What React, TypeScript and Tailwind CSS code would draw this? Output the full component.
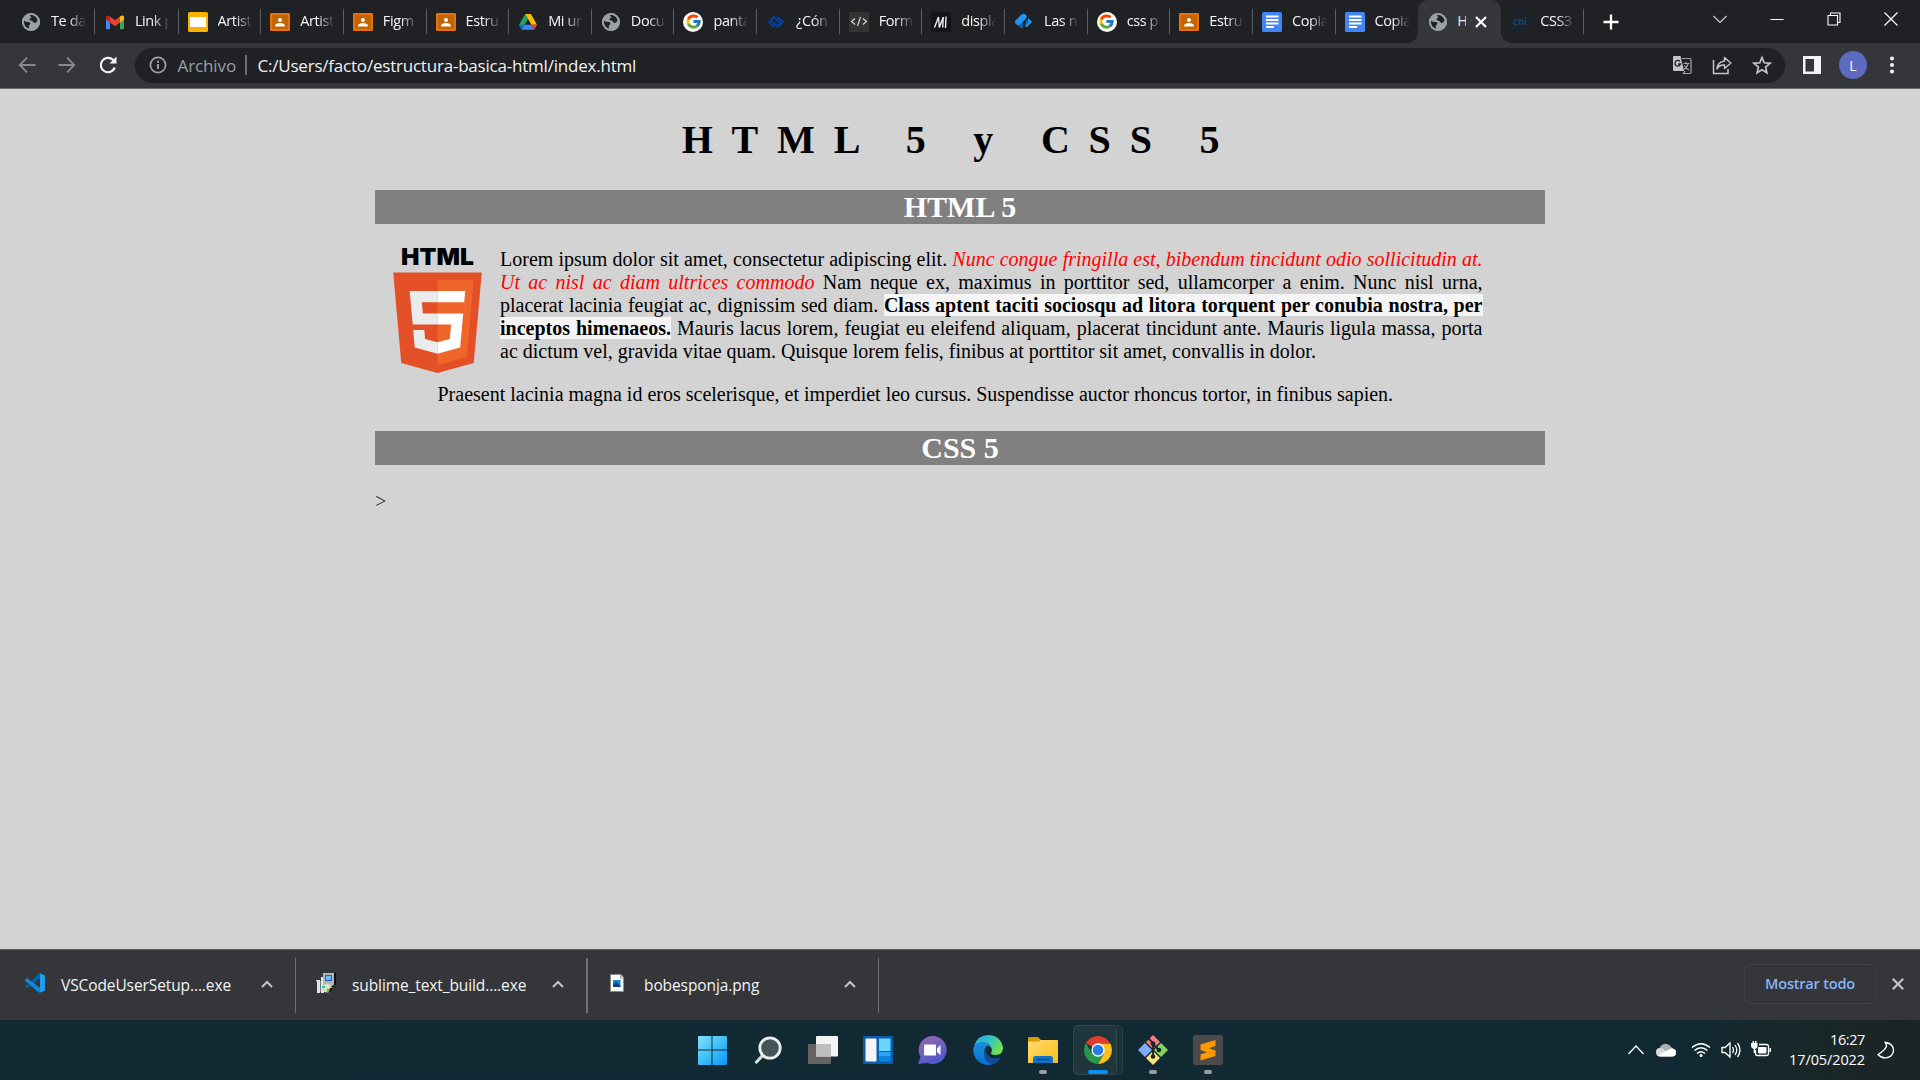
import React from 'react';
import { FcGoogle } from 'react-icons/fc';

const UI = 'font-["Open_Sans","Noto_Sans",sans-serif]';

function Globe() {
  return (
    <svg viewBox="0 0 20 20" className="size-5">
      <circle cx="10" cy="10" r="9" fill="#9aa0a6" />
      <path d="M3 8.500c1.500 1.800 3.500 1.200 5 1.600 1.800.5 1.600 2.400.4 2.900-1 .5-.6 1.800-.2 3.800C5 16.300 2.600 13.500 3 8.500zM9 3.200c3-.7 6.500 1 7.700 5-1.400 1.700-1.500 3-3.200 2.800-1.600-.2-1.200-2-2.700-2.200-1.700-.2-2.500-.6-2.300-1.800.3-1.200 2-.6 2-1.700C10.500 4.500 8.500 4.500 9 3.200z" fill="#202124" />
      <circle cx="10" cy="10" r="8.100" fill="none" stroke="#9aa0a6" strokeWidth="1.800" />
    </svg>
  );
}

function Gmail() {
  return (
    <svg viewBox="0 0 20 20" className="size-5">
      <path d="M1 5.500V16a1.200 1.200 0 0 0 1.200 1.200H5V9z" fill="#4285f4" />
      <path d="M19 5.500V16a1.200 1.200 0 0 1-1.200 1.200H15V9z" fill="#34a853" />
      <path d="M5 4.500v6l5 3.800 5-3.800v-6l-5 3.800z" fill="#ea4335" />
      <path d="M1 5.500C1 3.200 3.300 3.200 5 4.500v6L1 7.500z" fill="#c5221f" />
      <path d="M19 5.500c0-2.300-2.300-2.300-4-1v6l4-3z" fill="#fbbc04" />
    </svg>
  );
}

function Slides() {
  return (
    <svg viewBox="0 0 20 20" className="size-5">
      <rect width="20" height="20" rx="1.500" fill="#f9b300" />
      <rect x="2" y="5" width="16" height="10" fill="#fff" />
    </svg>
  );
}

function Classroom() {
  return (
    <svg viewBox="0 0 20 20" className="size-5">
      <rect y="1" width="20" height="18" rx="1.200" fill="#e8710a" />
      <rect x="2" y="3" width="16" height="14" fill="#c26401" />
      <circle cx="10" cy="8" r="2" fill="#fff" />
      <path d="M5 14.500c0-2.400 2.500-3.400 5-3.400s5 1 5 3.400z" fill="#fff" />
    </svg>
  );
}

function Drive() {
  return (
    <svg viewBox="0 0 20 20" className="size-5">
      <path d="M7.200 2 1 12.800l2.900 4.700 6.100-10.600z" fill="#1ea362" />
      <path d="M7.200 2h5.600l2.700 4.600L19 12.800h-5.600z" fill="#fbbc04" />
      <path d="M3.700 17.700 6.600 12.800H13.400l2.900 4.900z" fill="#4285f4" />
      <path d="M13.400 12.800H19l-2.700 4.900z" fill="#ea4335" />
      <path d="M1 12.800h5.600l-2.900 4.900z" fill="#1967d2" />
    </svg>
  );
}

function Google() {
  return (
    <span className="flex size-5 items-center justify-center rounded-full bg-white">
      <FcGoogle size={17} />
    </span>
  );
}

function BlueKnot() {
  return (
    <svg viewBox="0 0 20 20" className="size-5" fill="none" stroke="#0a3f94" strokeWidth="2">
      <path d="M8.500 15 3 10l5-5 6.500 6.500-2.500 2.500M11.500 5l5.500 5-5 5L6 8.800" />
    </svg>
  );
}

function CodeIcon() {
  return (
    <svg viewBox="0 0 20 20" className="size-5">
      <rect width="20" height="20" fill="#333" />
      <path d="M6 6.500 2.500 9.500 6 12.500M14 6.500l3.500 3L14 12.500M11.500 5 8.500 14" fill="none" stroke="#ddd" strokeWidth="1.100" />
    </svg>
  );
}

function Mdn() {
  return (
    <svg viewBox="0 0 20 20" className="size-5">
      <rect width="20" height="20" fill="#15141a" />
      <path d="M3.500 15.500 7.500 5l.8 10.500L12.300 5M15 4.500l-.5 11.500M12.300 5l-.6 10.500" fill="none" stroke="#eee" strokeWidth="1.400" />
    </svg>
  );
}

function BlueShapes() {
  return (
    <svg viewBox="0 0 20 20" className="size-5">
      <path d="M1 9 7.500 2.500q2-1.500 4 0t.5 4L6.500 13q-2 1-4-.5T1 9z" fill="#1d96f5" />
      <path d="M4.500 13.500 9 10v5.500q-2 2-4.500-2z" fill="#17619c" />
      <path d="m14.500 6 3.500 4-5.500 5.500q-2-2-.5-4 2-2.500 2.500-5.500z" fill="#1d96f5" />
      <path d="m12 7.500 2.500 2.500-3 3z" fill="#17619c" />
    </svg>
  );
}

function Docs() {
  return (
    <svg viewBox="0 0 20 20" className="size-5">
      <rect width="20" height="20" rx="1.500" fill="#4285f4" />
      <path d="M4 4.500h12.500M4 8h12.500M4 11.500h12.500M4 15h8" stroke="#fff" strokeWidth="1.900" />
    </svg>
  );
}

function Cni() {
  return (
    <svg viewBox="0 0 20 20" className="size-5" fill="none">
      <path d="M5 4Q13-.5 18 4q2 4-1 8M16 15Q8 21 2 16-.5 11 3 6" stroke="#0b2a45" strokeWidth="1.300" />
      <path d="M7.500 8Q4 7.500 3.800 10.500 4 13.500 7.500 12.500M9.500 13V8q3.500-.5 3.500 1.500V13M15.500 8v5M15.700 5v1.500" stroke="#104a80" strokeWidth="1.500" />
    </svg>
  );
}

const tabs: { icon: React.ReactNode; label: string }[] = [
  { icon: <Globe />, label: 'Te da' },
  { icon: <Gmail />, label: 'Link p' },
  { icon: <Slides />, label: 'Artist' },
  { icon: <Classroom />, label: 'Artist' },
  { icon: <Classroom />, label: 'Figm' },
  { icon: <Classroom />, label: 'Estru' },
  { icon: <Drive />, label: 'Mi un' },
  { icon: <Globe />, label: 'Docu' },
  { icon: <Google />, label: 'panta' },
  { icon: <BlueKnot />, label: '¿Cón' },
  { icon: <CodeIcon />, label: 'Form' },
  { icon: <Mdn />, label: 'displa' },
  { icon: <BlueShapes />, label: 'Las n' },
  { icon: <Google />, label: 'css p' },
  { icon: <Classroom />, label: 'Estru' },
  { icon: <Docs />, label: 'Copia' },
  { icon: <Docs />, label: 'Copia' },
];

function Tab({ icon, label, line, first }: { icon: React.ReactNode; label: string; line: boolean; first?: boolean }) {
  return (
    <div className={`flex h-[43px] w-[82.65px] shrink-0 items-center ${first ? 'mr-[1.3px]' : ''}`}>
      <span className="ml-[9px] shrink-0">{icon}</span>
      <span className="mb-0.5 ml-2.5 w-[35px] shrink-0 overflow-hidden whitespace-nowrap text-[14.5px] tracking-[-0.4px] text-[#f5f6f7] [mask-image:linear-gradient(to_right,black_50%,transparent_100%)]">
        {label}
      </span>
      {line && <span className="ml-auto h-[25px] w-px bg-[#5a5d61]" />}
    </div>
  );
}

function TabStrip() {
  return (
    <div className="flex h-[43px] items-center bg-[#202124] pl-3">
      {tabs.map((t, i) => (
        <Tab key={i} icon={t.icon} label={t.label} line={i !== tabs.length - 1} first={i === 0} />
      ))}
      <div className="relative flex h-[43px] w-[83px] shrink-0 items-center rounded-t-[10px] bg-[#35363a]">
        <span className="absolute bottom-0 -left-2.5 size-2.5 bg-[radial-gradient(circle_at_0_0,transparent_9.5px,#35363a_10px)]" />
        <span className="absolute -right-2.5 bottom-0 size-2.5 bg-[radial-gradient(circle_at_100%_0,transparent_9.5px,#35363a_10px)]" />
        <span className="ml-[9.5px]">
          <Globe />
        </span>
        <span className="mb-0.5 ml-[9.5px] w-[9px] overflow-hidden text-[14.5px] text-[#e8eaed]">H</span>
        <svg viewBox="0 0 12 12" className="ml-[9px] size-3" stroke="#fff" strokeWidth="2.200">
          <path d="m1 1 10 10M11 1 1 11" />
        </svg>
      </div>
      <Tab icon={<Cni />} label="CSS3" line />
      <svg viewBox="0 0 16 16" className="ml-[19px] size-4" stroke="#fff" strokeWidth="2.300">
        <path d="M8 .5v15M.5 8h15" />
      </svg>
      <div className="mr-[22px] mb-[6px] ml-auto flex items-center gap-[43px]">
        <svg viewBox="0 0 14 14" className="size-3.5" fill="none" stroke="#ccc" strokeWidth="1.200">
          <path d="m.5 4 6.500 6.500L13.500 4" />
        </svg>
        <svg viewBox="0 0 14 14" className="size-3.5" stroke="#fff" strokeWidth="1">
          <path d="M.5 7.500h13" />
        </svg>
        <svg viewBox="0 0 14 14" className="size-3.5" fill="none" stroke="#fff" strokeWidth="1.100">
          <path d="M1 3.500h9.500V13H1zM3.500 3.500V1H13v9.500h-2.500" />
        </svg>
        <svg viewBox="0 0 14 14" className="size-3.5" stroke="#fff" strokeWidth="1.200">
          <path d="m.5.5 13 13M13.500.5l-13 13" />
        </svg>
      </div>
    </div>
  );
}

function Toolbar() {
  return (
    <div className="flex h-[46px] items-center border-b border-[#6b6c6e] bg-[#35363a] pb-px">
      <svg viewBox="0 0 18 18" className="ml-[18px] size-[18px]" fill="none" stroke="#86888a" strokeWidth="1.800">
        <path d="M17.500 9H2M9 1.700 1.700 9 9 16.300" />
      </svg>
      <svg viewBox="0 0 18 18" className="ml-[22px] size-[18px]" fill="none" stroke="#86888a" strokeWidth="1.800">
        <path d="M.5 9H16M9 1.700 16.300 9 9 16.300" />
      </svg>
      <svg viewBox="0 0 20 20" className="ml-[22px] size-5" fill="none" stroke="#f1f3f4" strokeWidth="2.200">
        <path d="M16.800 12.500A7.200 7.200 0 1 1 15 4.800l1.500 1.500" />
        <path d="M18.500 1.500v7h-7z" fill="#f1f3f4" stroke="none" />
      </svg>
      <div className="ml-[17px] flex h-[35px] w-[1650px] items-center rounded-full bg-[#202124]">
        <svg viewBox="0 0 18 18" className="ml-[13.500px] size-[18px]" fill="none" stroke="#9aa0a6" strokeWidth="1.700">
          <circle cx="9" cy="9" r="7.600" />
          <path d="M9 8v5M9 4.800v1.900" strokeWidth="2" />
        </svg>
        <span className="mt-px ml-[11px] w-[67px] text-[17px] tracking-[-0.1px] text-[#9aa0a6]">Archivo</span>
        <span className="h-5 w-0.5 bg-[#6b6e72]" />
        <span className="mt-px ml-[11px] whitespace-nowrap text-[17px] tracking-[-0.21px] text-[#f1f3f4]">
          C:/Users/facto/estructura-basica-html/index.html
        </span>
        <div className="mr-[13px] ml-auto flex items-center gap-5">
          <svg viewBox="0 0 20 20" className="size-5">
            <path d="M2 1h6.500l3.500 15H2.500Q1 16 1 14.500V2q0-1 1-1z" fill="#c4c5c7" />
            <path d="M10 3.500h8q1 0 1 1V17q0 1.500-1 1.500h-6.500L13 16" fill="none" stroke="#a4a5a7" strokeWidth="1.200" />
            <path d="M8 6.500A2.800 2.800 0 1 0 8.500 9H6" fill="none" stroke="#202124" strokeWidth="1.300" />
            <path d="M11.500 8.500h6M14 7v1.500M16 9q-1 3.500-4 5.500M12.500 10.500q1.500 3 4.500 4.500" fill="none" stroke="#a4a5a7" strokeWidth="1.200" />
          </svg>
          <svg viewBox="0 0 20 20" className="size-5" fill="none" stroke="#c4c5c7" strokeWidth="1.500">
            <path d="M1.500 5v13.500H16V14" />
            <path d="M12.500 2.500 18.800 8l-6.300 5.500V10Q7.500 9.500 5 14q.5-7 7.500-8z" strokeLinejoin="round" />
          </svg>
          <svg viewBox="0 0 20 20" className="size-5" fill="none" stroke="#c4c5c7" strokeWidth="1.700">
            <path d="m10 2.500 2.200 5.300 5.800.5-4.400 3.800 1.300 5.600-4.900-3-4.900 3 1.300-5.600L2 8.300l5.800-.5z" />
          </svg>
        </div>
      </div>
      <svg viewBox="0 0 18 18" className="ml-[18px] size-[18px]">
        <path d="M0 0h18v18H0zM2.500 3v12.500H11V3z" fill="#f1f3f4" fillRule="evenodd" />
      </svg>
      <span className="ml-[18px] flex size-7 items-center justify-center rounded-full bg-[#5c6bc0] text-[14px] text-white">L</span>
      <svg viewBox="0 0 4 18" className="ml-[23px] h-[18px] w-1 overflow-visible" fill="#f1f3f4">
        <circle cx="2" cy="2.500" r="2" />
        <circle cx="2" cy="9" r="2" />
        <circle cx="2" cy="15.500" r="2" />
      </svg>
    </div>
  );
}

function Html5Logo() {
  return (
    <svg viewBox="0 0 512 512" className="float-left size-[125px]">
      <text x="107" y="70" textLength="298" lengthAdjust="spacingAndGlyphs" fontFamily="Inter" fontWeight="900" fontSize="95">
        HTML
      </text>
      <path fill="#e34f26" d="M107.600 471l-33-370.400h362.800l-33 370.200L255.700 512" />
      <path fill="#ef652a" d="M256 480.500V131H404.300L376 447" />
      <path fill="#ebebeb" d="M142 176.300h114v45.400h-64.200l4.200 46.500h60v45.300H154.400M156.400 336.300H202l3.200 36.300 50.800 13.600v47.400l-93.200-26" />
      <path fill="#fff" d="M369.600 176.300H255.800v45.400h109.600M361.300 268.200H255.800v45.400h56l-5.300 59-50.700 13.600v47.200l93-25.800" />
    </svg>
  );
}

function Page() {
  return (
    <main className="h-[860px] overflow-hidden bg-[#d3d3d3] font-['Liberation_Serif',serif] text-[20px] leading-[23px] text-black">
      <div className="mx-auto w-[1170px]">
        <h1 className="pt-[28px] text-center text-[40px] leading-[46px] font-bold tracking-[18.8px]">HTML 5 y CSS 5</h1>
        <h2 className="mt-[27px] h-[34px] bg-[#808080] text-center text-[30px] leading-[34px] font-bold text-white">HTML 5</h2>
        <div className="mt-[24px]">
          <Html5Logo />
          <p className="mx-[62.5px] text-justify">
            Lorem ipsum dolor sit amet, consectetur adipiscing elit.{' '}
            <em className="text-[#ff0000]">
              Nunc congue fringilla est, bibendum tincidunt odio sollicitudin at. Ut ac nisl ac diam ultrices commodo
            </em>{' '}
            Nam neque ex, maximus in porttitor sed, ullamcorper a enim. Nunc nisl urna, placerat lacinia feugiat ac,
            dignissim sed diam.{' '}
            <strong className="bg-[#f5f5f5] font-bold">
              Class aptent taciti sociosqu ad litora torquent per conubia nostra, per inceptos himenaeos.
            </strong>{' '}
            Mauris lacus lorem, feugiat eu eleifend aliquam, placerat tincidunt ante. Mauris ligula massa, porta ac
            dictum vel, gravida vitae quam. Quisque lorem felis, finibus at porttitor sit amet, convallis in dolor.
          </p>
          <p className="mx-[62.5px] mt-5 text-justify">
            Praesent lacinia magna id eros scelerisque, et imperdiet leo cursus. Suspendisse auctor rhoncus tortor, in
            finibus sapien.
          </p>
        </div>
        <h2 className="mt-[25px] h-[34px] bg-[#808080] text-center text-[30px] leading-[34px] font-bold text-white">CSS 5</h2>
        <div className="mt-[25px] text-[#333]">&gt;</div>
      </div>
    </main>
  );
}

function Caret() {
  return (
    <svg viewBox="0 0 12 8" className="h-2 w-3" fill="none" stroke="#c4c5c7" strokeWidth="2">
      <path d="m1 7 5-5 5 5" />
    </svg>
  );
}

function VsCode() {
  return (
    <svg viewBox="0 0 20 20" className="size-5">
      <path d="M14.500 0 2 12.500 0 12v2l2 1.200L15 5z" fill="#0065a9" />
      <path d="M2 5 0 6.500v1L14.500 20 15 15z" fill="#007acc" />
      <path d="M14.500 0 20 2.500v15L14.500 20q.8-.8.5-2V2q.2-1.200-.5-2z" fill="#1f9cf0" />
      <path d="M2 5 15 15l-.5 5L0 7.500z" fill="#1285d8" />
    </svg>
  );
}

function Installer() {
  return (
    <svg viewBox="0 0 20 20" className="size-5">
      <path d="M0 7h4v13H1V9zM5 4h3v16H5z" fill="#e4e4e4" />
      <path d="M4 8h1v11H4zM8 5h1v14H8z" fill="#777" />
      <path d="M7 0h12v11l-3 2H7z" fill="#b5b5b5" />
      <path d="M18 0h2v12h-2zM16 13h3v1h-3z" fill="#111" />
      <rect x="9" y="2" width="7" height="6" fill="#1e5fd8" />
      <rect x="10" y="3" width="5" height="4" fill="#69b7ff" />
      <circle cx="11" cy="15" r="4.500" fill="#d8dcc0" />
      <path d="M6 13h3v2H6z" fill="#00d8d8" />
      <path d="M11 16h3v3h-3z" fill="#3ee000" />
      <path d="M9 12h3v2H9z" fill="#f2f26a" />
      <path d="M14 15h2v2h-1v2h-2z" fill="#111" />
    </svg>
  );
}

function PngFile() {
  return (
    <svg viewBox="0 0 20 20" className="size-5">
      <path d="M2.500 1.500H13L15.500 4.500v14h-13z" fill="#fafafa" stroke="#8a8a8a" />
      <path d="M12.500 1.500V5h3" fill="#ddd" stroke="#8a8a8a" strokeWidth=".8" />
      <rect x="5" y="7" width="7.500" height="7" fill="#1c86d1" />
      <path d="m5 12 3-3 4.500 4v1H5z" fill="#123f86" />
    </svg>
  );
}

function DownloadItem({ icon, name, box }: { icon: React.ReactNode; name: string; box: string }) {
  return (
    <div className={`flex h-[55px] items-center border-r border-[#6f7073] ${box}`}>
      <span className="mb-1">{icon}</span>
      <span className="mt-0.5 ml-4 whitespace-nowrap text-[15.5px] tracking-[-0.1px] text-[#f1f3f4]">{name}</span>
      <span className="mr-[22px] mb-0.5 ml-auto">
        <Caret />
      </span>
    </div>
  );
}

function DownloadShelf() {
  return (
    <div className="flex h-[71px] items-center border-t border-[#5b5c5f] bg-[#35363a]">
      <DownloadItem icon={<VsCode />} name="VSCodeUserSetup....exe" box="w-[296px] pl-[25px]" />
      <DownloadItem icon={<Installer />} name="sublime_text_build....exe" box="w-[291px] pl-5" />
      <DownloadItem icon={<PngFile />} name="bobesponja.png" box="w-[292px] pl-5 border-l" />
      <div className="mr-4 mb-[2px] ml-auto flex h-10 w-[132px] items-center justify-center rounded-md border border-[#404145] pb-px text-[14.5px] font-semibold tracking-[-0.2px] text-[#8ab4f8]">
        Mostrar todo
      </div>
      <svg viewBox="0 0 12 12" className="mr-4 mb-0.5 size-3" stroke="#c4c5c7" strokeWidth="2.200">
        <path d="m.8.8 10.400 10.400M11.200.8.8 11.200" />
      </svg>
    </div>
  );
}

const WindowsIcon = () => (
  <svg viewBox="0 0 30 30" className="mr-px size-[30px]">
    <defs>
      <linearGradient id="win" x1="0" y1="0" x2="1" y2="1">
        <stop offset="0" stopColor="#83e0fd" />
        <stop offset=".5" stopColor="#3fc0fb" />
        <stop offset="1" stopColor="#0a95f5" />
      </linearGradient>
    </defs>
    <path d="M2 1h12.500v13.500H1V2q0-1 1-1zM15.500 1H29q1 0 1 1v12.500H15.500zM1 15.500h13.500V30H2q-1 0-1-1zM15.500 15.500H30V29q0 1-1 1H15.500z" fill="url(#win)" />
  </svg>
);

const SearchIcon = () => (
  <svg viewBox="0 0 30 30" className="size-[30px]">
    <path d="m10.500 19.500-7 7.500" stroke="#d5d9db" strokeWidth="3.200" strokeLinecap="round" />
    <circle cx="17" cy="13" r="10.200" fill="#41555b" stroke="#eceeef" strokeWidth="2.800" />
  </svg>
);

const TaskViewIcon = () => (
  <svg viewBox="0 0 30 30" className="size-[30px]">
    <rect y="9" width="23" height="20" rx="1" fill="#66625f" />
    <rect x="8" y="1" width="22" height="20.500" rx="1" fill="#f3f3f3" />
    <path d="M8 9h15v12.500H8z" fill="#bebebe" />
  </svg>
);

const WidgetsIcon = () => (
  <svg viewBox="0 0 30 30" className="size-[30px]">
    <rect y="1" width="30" height="28" rx="1.500" fill="#0b5cab" />
    <rect x="2.500" y="3.500" width="11" height="23" rx="1" fill="#f4f4f6" />
    <path d="M16 3.500h11.500V16H16z" fill="#69d6ff" />
    <path d="M16 17h11.500v4.500H16z" fill="#25a9f7" />
    <path d="M16 22h11.500v4.500H16z" fill="#0684e8" />
  </svg>
);

const ChatIcon = () => (
  <svg viewBox="0 0 30 30" className="mr-0.5 size-[30px]">
    <defs>
      <linearGradient id="chat" x1="0" y1="0" x2=".5" y2="1">
        <stop offset="0" stopColor="#9a6ab0" />
        <stop offset="1" stopColor="#5059c9" />
      </linearGradient>
    </defs>
    <path d="M15.500 1a14 14 0 1 1-5 27L1 29l2.500-7A14 14 0 0 1 15.500 1z" fill="url(#chat)" />
    <rect x="7" y="9.500" width="12" height="11" rx="1" fill="#fff" />
    <path d="m20 13.500 3.500-3.500v10L20 17z" fill="#fff" />
  </svg>
);

const EdgeIcon = () => (
  <svg viewBox="0 0 30 30" className="size-[30px]">
    <defs>
      <linearGradient id="edgeTop" x1="0" y1="0" x2="1" y2=".5">
        <stop offset="0" stopColor="#2aa5e0" />
        <stop offset=".5" stopColor="#2fc2c8" />
        <stop offset="1" stopColor="#6fe04f" />
      </linearGradient>
      <linearGradient id="edgeBody" x1="0" y1="0" x2="0" y2="1">
        <stop offset="0" stopColor="#1a8fdc" />
        <stop offset="1" stopColor="#0b6fd0" />
      </linearGradient>
    </defs>
    <path d="M1 11Q4 .5 15 0 27 0 30 12q.5 8-7.500 8-6 0-4-3 1.500-4-2-6-6-4-15.500 0z" fill="url(#edgeTop)" />
    <path d="M0 15Q1 8 8.500 7q7-.5 9.500 4-5-2-6.500 4Q11 26 20 29.200 16 30.500 11 29.500 1 26 0 15z" fill="url(#edgeBody)" />
    <path d="M12 13.500Q8 27 20 29.200q5-1.700 7.500-6.500-1-.8-5 .5Q14 24 12 13.500z" fill="#114e99" />
  </svg>
);

const FolderIcon = () => (
  <svg viewBox="0 0 30 30" className="size-[30px]">
    <defs>
      <linearGradient id="folder" x1="0" y1="0" x2="1" y2="1">
        <stop offset="0" stopColor="#ffdc6e" />
        <stop offset="1" stopColor="#fcbc19" />
      </linearGradient>
    </defs>
    <path d="M1 2h9l3 3v5H0V3q0-1 1-1z" fill="#dd9a04" />
    <path d="M0 6.500h10.500L13 5h16q1 0 1 1v22H0z" fill="url(#folder)" />
    <path d="M5 28v-4.500q0-2.500 2.500-2.500h15q2.500 0 2.500 2.500V28z" fill="#1173c5" />
    <path d="M9 24.500h12" stroke="#0b4a89" strokeWidth="1.300" strokeLinecap="round" />
  </svg>
);

const ChromeIcon = () => (
  <svg viewBox="0 0 28 28" className="size-7">
    <path d="M14 14 1.900 7A14 14 0 0 1 26.100 7z" fill="#e33b2e" />
    <path d="M14 7h12.100A14 14 0 0 1 14 28l6-10.500z" fill="#fcc31e" />
    <path d="M1.900 7A14 14 0 0 0 14 28l6-10.500L14 14 7.900 17.500z" fill="#279847" />
    <path d="M14 7.400h12.100" stroke="#e33b2e" strokeWidth="1" />
    <circle cx="14" cy="14" r="6.700" fill="#fff" />
    <circle cx="14" cy="14" r="5.300" fill="#2a7bf0" />
  </svg>
);

const GitIcon = () => (
  <svg viewBox="0 0 30 30" className="size-[30px]">
    <path d="M15 0 22 7l-7 7-7-7z" fill="#f37c7c" />
    <path d="M23 8l7 7-7 7-7-7z" fill="#80d65f" />
    <path d="M7 8l7 7-7 7-7-7z" fill="#7eaefc" />
    <path d="M15 16l7 7-7 7-7-7z" fill="#fde180" />
    <path d="M10.500 3.500 15 8v13M15 9l6 6" stroke="#1b2226" strokeWidth="1.800" fill="none" />
    <circle cx="15" cy="8.500" r="2.300" fill="#1b2226" />
    <circle cx="21" cy="15" r="2.300" fill="#1b2226" />
    <circle cx="15" cy="21.500" r="2.300" fill="#1b2226" />
  </svg>
);

const SublimeIcon = () => (
  <svg viewBox="0 0 30 30" className="size-[30px]">
    <rect width="30" height="30" rx="2" fill="#4b4b4b" />
    <path d="M22.500 5v6l-6.500 2.200 6.500 2.300v5.500L7.500 25.500v-6l6.500-2.200-6.500-2.300V9.500z" fill="#ff9800" />
  </svg>
);

const taskIcons: { icon: React.ReactNode; state: 'idle' | 'open' | 'active' }[] = [
  { icon: <WindowsIcon />, state: 'idle' },
  { icon: <SearchIcon />, state: 'idle' },
  { icon: <TaskViewIcon />, state: 'idle' },
  { icon: <WidgetsIcon />, state: 'idle' },
  { icon: <ChatIcon />, state: 'idle' },
  { icon: <EdgeIcon />, state: 'idle' },
  { icon: <FolderIcon />, state: 'open' },
  { icon: <ChromeIcon />, state: 'active' },
  { icon: <GitIcon />, state: 'open' },
  { icon: <SublimeIcon />, state: 'open' },
];

function Taskbar() {
  return (
    <div className="flex h-[60px] items-center bg-[linear-gradient(to_right,#122a32_0%,#112932_88%,#192729_94%,#1b2426_100%)]">
      <div className="ml-[685px] flex">
        {taskIcons.map((t, i) => (
          <div key={i} className="relative flex h-[60px] w-[55px] items-center justify-center">
            {t.state === 'active' && (
              <>
                <span className="absolute top-[5px] left-[9px] h-[50px] w-[44px] rounded-[5px] border border-[#2c4047] bg-[#1b3037]" />
                <span className="absolute top-[5px] left-[3px] h-[50px] w-[44px] rounded-[5px] border border-[#33474e] bg-[#20363d]" />
              </>
            )}
            <span className="relative">{t.icon}</span>
            {t.state === 'open' && <span className="absolute top-[50px] h-1 w-2 rounded-full bg-[#95a0a4]" />}
            {t.state === 'active' && <span className="absolute top-[50px] h-1 w-5 rounded-full bg-[#0a8ff5]" />}
          </div>
        ))}
      </div>
      <div className="mr-[25px] ml-auto flex items-center text-white">
        <svg viewBox="0 0 16 10" className="h-2.5 w-4" fill="none" stroke="#fff" strokeWidth="1.300">
          <path d="m.5 9 7.500-8 7.500 8" />
        </svg>
        <svg viewBox="0 0 20 20" className="ml-3 size-5">
          <path d="M4 12a6 5.500 0 0 1 11-5q3 1 2 5z" fill="#a9b0b2" />
          <path d="M0 12q0-4 4-4 3 0 6 3l6-2.500q4 .5 4 4 0 4-4 4H4q-4 0-4-4.500z" fill="#d8dbdc" />
          <path d="m2 15.500 13-7q5 0 5 4t-4 4H4z" fill="#fff" />
        </svg>
        <svg viewBox="0 0 20 20" className="ml-[15px] size-5" fill="none" stroke="#fff" strokeWidth="1.500">
          <path d="M1 7.500q9-7.500 18 0M3.500 10.500q6.500-5.500 13 0M6 13.500q4-3.500 8 0" />
          <circle cx="10" cy="15.500" r="1.500" fill="#fff" stroke="none" />
        </svg>
        <svg viewBox="0 0 20 20" className="ml-2.5 size-5" fill="none" stroke="#fff" strokeWidth="1.300">
          <path d="M1 7.500h3L9 3v14l-5-4.500H1zM11.500 7q2 3 0 6M14 5q3.500 5 0 10M16.500 3q5 7 0 14" />
        </svg>
        <svg viewBox="0 0 20 20" className="ml-2.5 size-5">
          <path d="M8 4.500h7.500q2 0 2 2v7q0 2-2 2h-9q-2 0-2-2V10" fill="none" stroke="#fff" strokeWidth="1.300" />
          <rect x="7" y="7" width="8.500" height="6.500" rx="1" fill="#fff" />
          <path d="M18.500 8h1.500v4h-1.500zM0 3h1.500V1H3v2h1V1h1.500v2h1v4q-1 2-2.500 2v4H2.700V9Q0 8 0 6z" fill="#fff" />
        </svg>
        <div className="w-[94px] text-right text-[14.5px] leading-5 tracking-[-0.1px]">
          <div className="tracking-[-0.4px]">16:27</div>
          <div>17/05/2022</div>
        </div>
        <svg viewBox="0 0 18 18" className="ml-3 size-[18px]" fill="none" stroke="#fff" strokeWidth="1.400">
          <path d="M8 1.200q5 5-7 12.300 3.500 4 8.500 3.300 6.500-1.300 7-7.300Q16.500 2.500 8 1.200z" strokeLinejoin="round" />
        </svg>
      </div>
    </div>
  );
}

export default function App() {
  return (
    <div className={`flex h-[1080px] w-[1920px] flex-col overflow-hidden ${UI}`}>
      <TabStrip />
      <Toolbar />
      <Page />
      <DownloadShelf />
      <Taskbar />
    </div>
  );
}
